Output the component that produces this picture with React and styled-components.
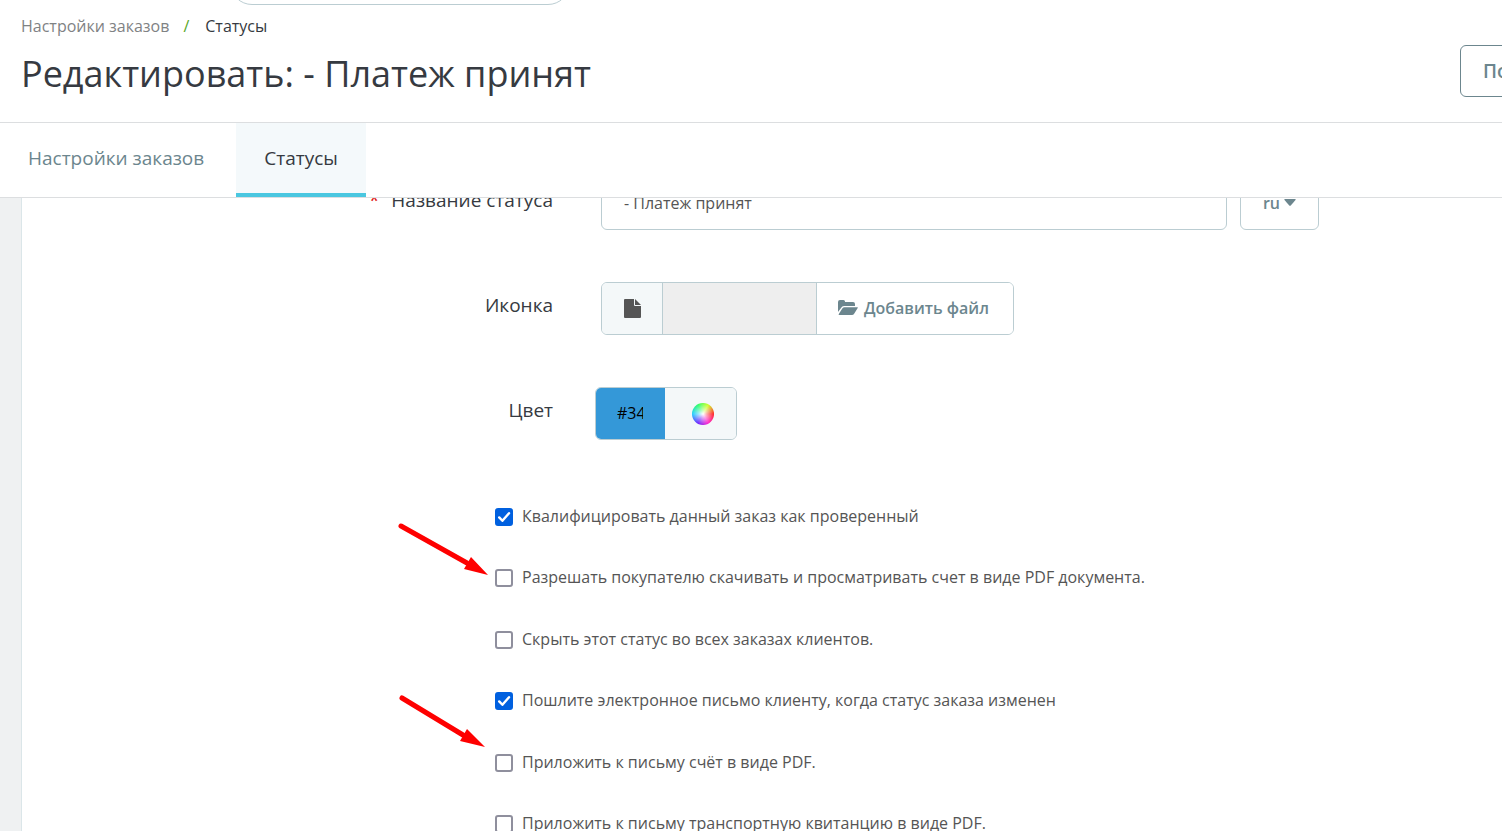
import { useState } from 'react';
import styled, { createGlobalStyle } from 'styled-components'

const OPTIONS = [
  { id: 'logable', label: 'Квалифицировать данный заказ как проверенный', on: true },
  { id: 'invoice', label: 'Разрешать покупателю скачивать и просматривать счет в виде PDF документа.', on: false },
  { id: 'hidden', label: 'Скрыть этот статус во всех заказах клиентов.', on: false },
  { id: 'send_email', label: 'Пошлите электронное письмо клиенту, когда статус заказа изменен', on: true },
  { id: 'pdf_invoice', label: 'Приложить к письму счёт в виде PDF.', on: false },
  { id: 'pdf_delivery', label: 'Приложить к письму транспортную квитанцию в виде PDF.', on: false },
];

const FileIcon = () => (
  <svg width="17" height="19" viewBox="0 0 17 19" fill="currentColor" aria-hidden="true">
    <path d="M1 0h9v6a1 1 0 0 0 1 1h6v11a1 1 0 0 1-1 1H1a1 1 0 0 1-1-1V1a1 1 0 0 1 1-1z" />
    <path d="M11 0 17 6h-6z" />
  </svg>
);

const FolderIcon = () => (
  <svg width="20" height="16" viewBox="0 0 20 16" fill="currentColor" aria-hidden="true">
    <path d="M0 13V2Q0 0 2 0h3.500Q7 0 7 1.500V2h8Q17 2 17 4v2H6.500Q4.500 6 3.400 7.400L0 12z" />
    <path d="M6.500 7.200H19.300Q20.200 7.200 19.700 8L16 14Q15.300 15 14 15H1.300Q.2 15 .8 14L4.300 8.500Q5.200 7.200 6.500 7.200z" />
  </svg>
);

const CaretIcon = () => (
  <svg width="12" height="7" viewBox="0 0 12 7" fill="currentColor" aria-hidden="true">
    <path d="M1 0h10q1.300 0 .5 1L7 6.300q-1 1-2 0L.5 1Q-.3 0 1 0z" />
  </svg>
);

const App = () => {
  const [name, setName] = useState('- Платеж принят');
  const [color, setColor] = useState('#3498D8');
  const [checked, setChecked] = useState(OPTIONS.filter((o) => o.on).map((o) => o.id));

  const toggle = (id) => {
    if (checked.includes(id)) {
      setChecked(checked.filter((c) => c !== id));
    } else {
      setChecked([...checked, id]);
    }
  };

  return <>
    <GlobalStyle />
    <Page>
      <Header>
        <SearchStrip>
          <SearchInput aria-label="Поиск" />
        </SearchStrip>
        <Breadcrumb>
          <a href="#settings">Настройки заказов</a>
          <span className="slash">/</span>
          <a href="#statuses" className="current">Статусы</a>
        </Breadcrumb>
        <TitleRow>
          <Title>Редактировать: - Платеж принят</Title>
          <HelpButton type="button">Помощь</HelpButton>
        </TitleRow>
      </Header>
      <Tabs>
        <Tab href="#settings">Настройки заказов</Tab>
        <Tab href="#statuses" $active>Статусы</Tab>
      </Tabs>
      <Scroller>
        <Panel>
          <FormRow>
            <Label htmlFor="name"><span className="required">*</span>Название статуса</Label>
            <NameFields>
              <TextInput id="name" value={name} onChange={(e) => setName(e.target.value)} />
              <LangButton type="button">ru <CaretIcon /></LangButton>
            </NameFields>
          </FormRow>
          <FormRow>
            <Label htmlFor="icon">Иконка</Label>
            <Group>
              <Addon><FileIcon /></Addon>
              <FileName id="icon" readOnly />
              <AddButton type="button"><FolderIcon />Добавить файл</AddButton>
            </Group>
          </FormRow>
          <FormRow>
            <Label htmlFor="color">Цвет</Label>
            <ColorGroup>
              <ColorInput id="color" $bg={color} value={color} onChange={(e) => setColor(e.target.value)} />
              <PickerButton type="button" aria-label="Выбрать цвет"><Wheel /></PickerButton>
            </ColorGroup>
          </FormRow>
          <Options>
            {OPTIONS.map((o) => (
              <Option key={o.id}>
                <Check>
                  <input type="checkbox" checked={checked.includes(o.id)} onChange={() => toggle(o.id)} />
                  {checked.includes(o.id) && (
                    <svg viewBox="0 0 18 18"><path d="M4.2 9.4 7.4 12.8 14 5.2" /></svg>
                  )}
                </Check>
                <span className="text">{o.label}</span>
              </Option>
            ))}
            <Arrows width="100" height="240" viewBox="0 0 100 240" aria-hidden="true">
              <path className="shaft" d="M6 6 72 43M7 178 68 215" />
              <path d="M76 37 93 55 69 49zM72 209 90 227 65 221z" />
            </Arrows>
          </Options>
        </Panel>
      </Scroller>
    </Page>
  </>
};

const GlobalStyle = createGlobalStyle`
  *{
    box-sizing: border-box;
  }
  body{
    margin: 0;
    background: #fff;
    color: #363a41;
    font-family: "Open Sans", "Noto Sans", sans-serif;
    font-size: 16px;
    overflow: hidden;
  }
  input, button{
    font-family: inherit;
    font-size: 16px;
    margin: 0;
  }
  button{
    cursor: pointer;
  }
`

const Page = styled.div`
  display: flex;
  flex-direction: column;
  height: 100vh;
`

const Header = styled.header`
  flex: none;
  overflow: hidden;
  border-bottom: 1px solid #dcdee0;
  padding-bottom: 19px;
`

const SearchStrip = styled.div`
  display: flex;
  align-items: flex-end;
  height: 5px;
  padding-left: 230px;
`

const SearchInput = styled.input`
  flex: none;
  width: 340px;
  height: 44px;
  border: 1px solid #bbcdd2;
  border-radius: 22px;
  background: #fff;
`

const Breadcrumb = styled.nav`
  display: flex;
  padding: 10px 21px 0;
  line-height: 22px;
  a{
    color: #7f8284;
    text-decoration: none;
  }
  a.current{
    color: #363a41;
  }
  .slash{
    color: #5aa728;
    padding: 0 16px 0 14px;
  }
`

const TitleRow = styled.div`
  display: flex;
  justify-content: space-between;
  align-items: flex-start;
  padding: 8px 0 0 21px;
`

const Title = styled.h1`
  margin: 0;
  font-size: 36px;
  font-weight: 400;
  line-height: 58px;
  white-space: nowrap;
`

/* runs past the right edge of the window */
const HelpButton = styled.button`
  flex: none;
  height: 52px;
  width: 120px;
  margin-right: -78px;
  padding: 0 22px;
  text-align: left;
  font-size: 19px;
  font-weight: 600;
  color: #6c868e;
  background: #fff;
  border: 1px solid #6c868e;
  border-radius: 6px;
`

const Tabs = styled.nav`
  flex: none;
  display: flex;
  gap: 4px;
  height: 75px;
  border-bottom: 1px solid #dcdee0;
`

const Tab = styled.a`
  display: flex;
  align-items: center;
  padding: 0 28px;
  font-size: 19px;
  text-decoration: none;
  color: ${(p) => (p.$active ? '#363a41' : '#6c868e')};
  background: ${(p) => (p.$active ? '#f4f9fb' : 'transparent')};
  border-bottom: 4px solid ${(p) => (p.$active ? '#4ac7e0' : 'transparent')};
`

const Scroller = styled.main`
  flex: 1;
  min-height: 0;
  overflow: hidden;
  background: #eff1f2;
  padding-left: 21px;
`

/* already scrolled a little, the first row sits half under the tabs */
const Panel = styled.form`
  display: flex;
  flex-direction: column;
  gap: 52px;
  margin-top: -21px;
  padding-right: 183px;
  background: #fff;
  border-left: 1px solid #dbe6e9;
`

const FormRow = styled.div`
  display: grid;
  grid-template-columns: 531px 1fr;
  column-gap: 48px;
`

const Label = styled.label`
  padding-top: 10px;
  font-size: 19px;
  font-weight: 500;
  line-height: 26px;
  text-align: right;
  .required{
    color: #e01b1b;
    margin-right: 12px;
  }
`

const NameFields = styled.div`
  display: flex;
  gap: 13px;
`

const TextInput = styled.input`
  flex: 1;
  min-width: 0;
  height: 53px;
  padding: 0 22px 2px;
  color: #555;
  border: 1px solid #bbcdd2;
  border-radius: 6px;
`

const LangButton = styled.button`
  display: flex;
  align-items: center;
  justify-content: center;
  gap: 4px;
  width: 79px;
  padding: 0 0 2px;
  font-weight: 600;
  color: #6c868e;
  background: #fff;
  border: 1px solid #bbcdd2;
  border-radius: 6px;
`

const Group = styled.div`
  display: flex;
  justify-self: start;
  height: 53px;
  border: 1px solid #bbcdd2;
  border-radius: 6px;
  overflow: hidden;
`

const Addon = styled.span`
  display: flex;
  align-items: center;
  justify-content: center;
  width: 61px;
  color: #555;
  background: #f4f8f9;
  border-right: 1px solid #bbcdd2;
`

const FileName = styled.input`
  width: 153px;
  border: none;
  background: #eee;
`

const AddButton = styled.button`
  display: flex;
  align-items: center;
  gap: 6px;
  padding: 0 24px 2px 21px;
  font-weight: 600;
  color: #6c868e;
  background: #fff;
  border: none;
  border-left: 1px solid #bbcdd2;
`

const ColorGroup = styled(Group)`
  margin-left: -6px;
`

const ColorInput = styled.input`
  width: 69px;
  padding: 0 22px 2px 21px;
  border: none;
  color: #000;
  background: ${(p) => p.$bg};
`

const PickerButton = styled.button`
  display: flex;
  align-items: center;
  justify-content: center;
  width: 71px;
  padding: 0 0 0 4px;
  background: #f4f8f9;
  border: none;
`

const Wheel = styled.span`
  width: 22px;
  height: 22px;
  border-radius: 50%;
  background:
    radial-gradient(circle, #fff 0, rgba(255, 255, 255, .6) 25%, rgba(255, 255, 255, 0) 70%),
    conic-gradient(from 90deg, #f22, #f2c, #62f, #2cf, #2f6, #cf2, #f22);
`

const Options = styled.div`
  position: relative;
  display: grid;
  grid-auto-rows: 1fr;
  height: 369px;
  padding-left: 473px;
  margin-top: -6px;
`

const Option = styled.label`
  display: flex;
  align-items: center;
  justify-self: start;
  gap: 9px;
  color: #555;
  .text{
    padding-bottom: 2px;
  }
`

const Check = styled.span`
  display: grid;
  input, svg{
    grid-area: 1 / 1;
    width: 18px;
    height: 18px;
  }
  input{
    appearance: none;
    border: 2px solid #8f8f9d;
    border-radius: 3px;
    background: #fff;
  }
  input:checked{
    border-color: #0060df;
    background: #0060df;
  }
  svg{
    fill: none;
    stroke: #fff;
    stroke-width: 2.4;
    stroke-linecap: round;
    stroke-linejoin: round;
    pointer-events: none;
  }
`

const Arrows = styled.svg`
  position: absolute;
  left: 373px;
  top: 34px;
  fill: #fe0000;
  pointer-events: none;
  .shaft{
    stroke: #fe0000;
    stroke-width: 5;
    stroke-linecap: round;
  }
`
export default App;
